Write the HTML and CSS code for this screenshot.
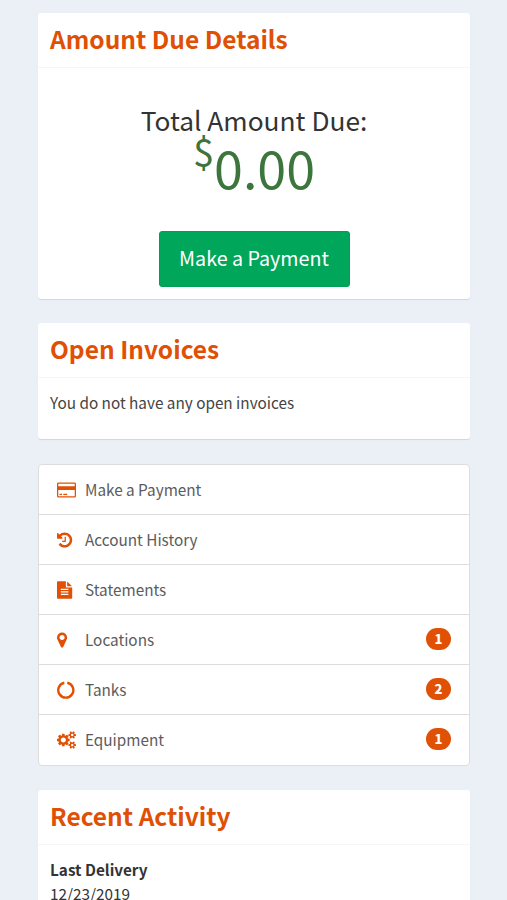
FILE: index.html
```html
<!DOCTYPE html>
<html lang="en">
<head>
<meta charset="utf-8">
<title>Account</title>
<link rel="stylesheet" href="styles.css">
</head>
<body>
<main class="page">
  <section class="card due">
    <h2 class="card-title">Amount Due Details</h2>
    <div class="due-body">
      <div class="due-label">Total Amount Due:</div>
      <div class="amount"><span class="currency">$</span><span class="figure">0.00</span></div>
      <button class="pay">Make a Payment</button>
    </div>
  </section>

  <section class="card invoices">
    <h2 class="card-title">Open Invoices</h2>
    <p class="text">You do not have any open invoices</p>
  </section>

  <nav class="menu">
    <a class="row"><svg class="icon" viewBox="0 0 1920 1792"><path d="M1760 128q66 0 113 47t47 113v1216q0 66-47 113t-113 47h-1600q-66 0-113-47t-47-113v-1216q0-66 47-113t113-47h1600zm-1600 128q-13 0-22.500 9.500t-9.500 22.500v224h1664v-224q0-13-9.500-22.500t-22.500-9.500h-1600zm1600 1280q13 0 22.500-9.500t9.500-22.500v-608h-1664v608q0 13 9.500 22.500t22.500 9.500h1600zm-1504-128v-128h256v128h-256zm384 0v-128h384v128h-384z"/></svg><span class="label">Make a Payment</span></a>
    <a class="row"><svg class="icon" viewBox="128 0 1920 1792"><path d="M1664 896q0 156-61 298t-164 245-245 164-298 61q-172 0-327-72.500t-264-204.500q-7-10-6.500-22.500t8.500-20.500l137-138q10-9 25-9 16 2 23 12 73 95 179 147t225 52q104 0 198.500-40.500t163.500-109.500 109.500-163.500 40.500-198.500-40.500-198.500-109.500-163.500-163.500-109.500-198.500-40.500q-98 0-188 35.500t-160 101.500l137 138q31 30 14 69-17 40-59 40h-448q-26 0-45-19t-19-45v-448q0-42 40-59 39-17 69 14l130 129q107-101 244.500-156.500t284.500-55.500q156 0 298 61t245 164 164 245 61 298zm-640-288v448q0 14-9 23t-23 9h-320q-14 0-23-9t-9-23v-64q0-14 9-23t23-9h224v-352q0-14 9-23t23-9h64q14 0 23 9t9 23z"/></svg><span class="label">Account History</span></a>
    <a class="row"><svg class="icon" viewBox="128 0 1920 1792"><path d="M1596 476q14 14 28 36h-472v-472q22 14 36 28zm-476 164h544v1056q0 40-28 68t-68 28h-1344q-40 0-68-28t-28-68v-1600q0-40 28-68t68-28h800v544q0 40 28 68t68 28zm160 736v-64q0-14-9-23t-23-9h-704q-14 0-23 9t-9 23v64q0 14 9 23t23 9h704q14 0 23-9t9-23zm0-256v-64q0-14-9-23t-23-9h-704q-14 0-23 9t-9 23v64q0 14 9 23t23 9h704q14 0 23-9t9-23zm0-256v-64q0-14-9-23t-23-9h-704q-14 0-23 9t-9 23v64q0 14 9 23t23 9h704q14 0 23-9t9-23z"/></svg><span class="label">Statements</span></a>
    <a class="row"><svg class="icon" viewBox="384 0 1920 1792"><path d="M1152 640q0-106-75-181t-181-75-181 75-75 181 75 181 181 75 181-75 75-181zm256 0q0 109-33 179l-364 774q-16 33-47.500 52t-67.500 19-67.500-19-46.500-52l-365-774q-33-70-33-179 0-212 150-362t362-150 362 150 150 362z"/></svg><span class="label">Locations</span><span class="badge">1</span></a>
    <a class="row"><svg class="icon" viewBox="0 0 1920 1792"><path class="ring" d="M740 160A760 760 0 1 0 1040 160"/></svg><span class="label">Tanks</span><span class="badge">2</span></a>
    <a class="row"><svg class="icon" viewBox="0 0 1920 1792"><path d="M896 896q0-106-75-181t-181-75-181 75-75 181 75 181 181 75 181-75 75-181zm768 512q0-52-38-90t-90-38-90 38-38 90q0 53 37.500 90.500t90.500 37.500 90.500-37.500 37.500-90.500zm0-1024q0-52-38-90t-90-38-90 38-38 90q0 53 37.500 90.500t90.500 37.500 90.500-37.500 37.500-90.500zm-384 421v185q0 10-7 19.500t-16 10.500l-155 24q-11 35-32 76 34 48 90 115 7 11 7 20 0 12-7 19-23 30-82.500 89.500t-78.500 59.500q-11 0-21-7l-115-90q-37 19-77 31-11 108-23 155-7 24-30 24h-186q-11 0-20-7.500t-10-17.500l-23-153q-34-10-75-31l-118 89q-7 7-20 7-11 0-21-8-144-133-144-160 0-9 7-19 10-14 41-53t47-61q-23-44-35-82l-152-24q-10-1-17-9.500t-7-19.500v-185q0-10 7-19.500t16-10.500l155-24q11-35 32-76-34-48-90-115-7-11-7-20 0-12 7-20 22-30 82-89t79-59q11 0 21 7l115 90q34-18 77-32 11-108 23-154 7-24 30-24h186q11 0 20 7.500t10 17.500l23 153q34 10 75 31l118-89q8-7 20-7 11 0 21 8 144 133 144 160 0 8-7 19-12 16-42 54t-45 60q23 48 34 82l152 23q10 2 17 10.500t7 19.500zm640 533v140q0 16-149 31-12 27-30 52 51 113 51 138 0 4-4 7-122 71-124 71-8 0-46-47t-52-68q-20 2-30 2t-30-2q-14 21-52 68t-46 47q-2 0-124-71-4-3-4-7 0-25 51-138-18-25-30-52-149-15-149-31v-140q0-16 149-31 13-29 30-52-51-113-51-138 0-4 4-7 4-2 35-20t59-34 30-16q8 0 46 46.500t52 67.500q20-2 30-2t30 2q51-71 92-112l6-2q4 0 124 70 4 3 4 7 0 25-51 138 17 23 30 52 149 15 149 31zm0-1024v140q0 16-149 31-12 27-30 52 51 113 51 138 0 4-4 7-122 71-124 71-8 0-46-47t-52-68q-20 2-30 2t-30-2q-14 21-52 68t-46 47q-2 0-124-71-4-3-4-7 0-25 51-138-18-25-30-52-149-15-149-31v-140q0-16 149-31 13-29 30-52-51-113-51-138 0-4 4-7 4-2 35-20t59-34 30-16q8 0 46 46.500t52 67.500q20-2 30-2t30 2q51-71 92-112l6-2q4 0 124 70 4 3 4 7 0 25-51 138 17 23 30 52 149 15 149 31z"/></svg><span class="label">Equipment</span><span class="badge">1</span></a>
  </nav>

  <section class="card activity">
    <h2 class="card-title">Recent Activity</h2>
    <div class="text"><strong>Last Delivery</strong><br>12/23/2019</div>
  </section>
</main>
</body>
</html>
```
FILE: styles.css
```css
* { box-sizing: border-box; }
html { overflow: hidden; }
body {
  margin: 0;
  height: 900px;
  overflow: hidden;
  background: #ebeff6;
  color: #333;
  font: 15.3px/24px "Noto Sans CJK SC", "Noto Sans", sans-serif;
}
.page {
  display: flex;
  flex-direction: column;
  padding: 13px 37px 0 38px;
}
.card {
  flex: none;
  background: #fff;
  border-radius: 3px;
  box-shadow: 0 1px 1px rgba(0, 0, 0, .1);
}
.due { height: 286px; margin-bottom: 24px; }
.invoices { height: 116px; margin-bottom: 25px; }
.activity { height: 150px; }
.card-title {
  margin: 0;
  height: 55px;
  padding: 0 12px;
  border-bottom: 1px solid #f5f5f5;
  color: #df5005;
  font-size: 24.5px;
  font-weight: 700;
  line-height: 52px;
}
.due-body {
  display: flex;
  flex-direction: column;
  align-items: center;
  padding-top: 35px;
}
.due-label { font-size: 26.3px; line-height: 34px; white-space: nowrap; }
.amount {
  display: flex;
  height: 58px;
  color: #3c763d;
}
.currency { font-size: 38px; line-height: 28px; }
.figure { font-size: 52px; line-height: 60px; }
.pay {
  width: 191px;
  height: 56px;
  margin-top: 36px;
  padding: 0 0 2px;
  border: 1px solid #009f55;
  border-radius: 3px;
  background: #00a65a;
  color: #fff;
  font: inherit;
  font-size: 19.7px;
}
.text { margin: 0; padding: 12px; }
.invoices .text { color: #444; }
.menu {
  flex: none;
  margin-bottom: 24px;
  border: 1px solid #ddd;
  border-radius: 4px;
  background: #fff;
}
.row {
  display: flex;
  align-items: center;
  height: 50px;
  padding: 0 18px 1px;
  color: #5c5c5c;
}
.row + .row { border-top: 1px solid #ddd; }
.row:first-child { height: 49px; padding-bottom: 0; }
.row:last-child { height: 51px; padding-bottom: 2px; }
.label { margin-top: -1px; }
.icon { width: 19px; height: 18px; margin: 1px 9px 0 0; fill: #e05005; }
.ring { fill: none; stroke: #e05005; stroke-width: 240; }
.badge {
  width: 25px;
  height: 22px;
  margin-left: auto;
  border-radius: 11px;
  background: #e05005;
  color: #fff;
  font-size: 13px;
  font-weight: 900;
  line-height: 22px;
  text-align: center;
}
```
